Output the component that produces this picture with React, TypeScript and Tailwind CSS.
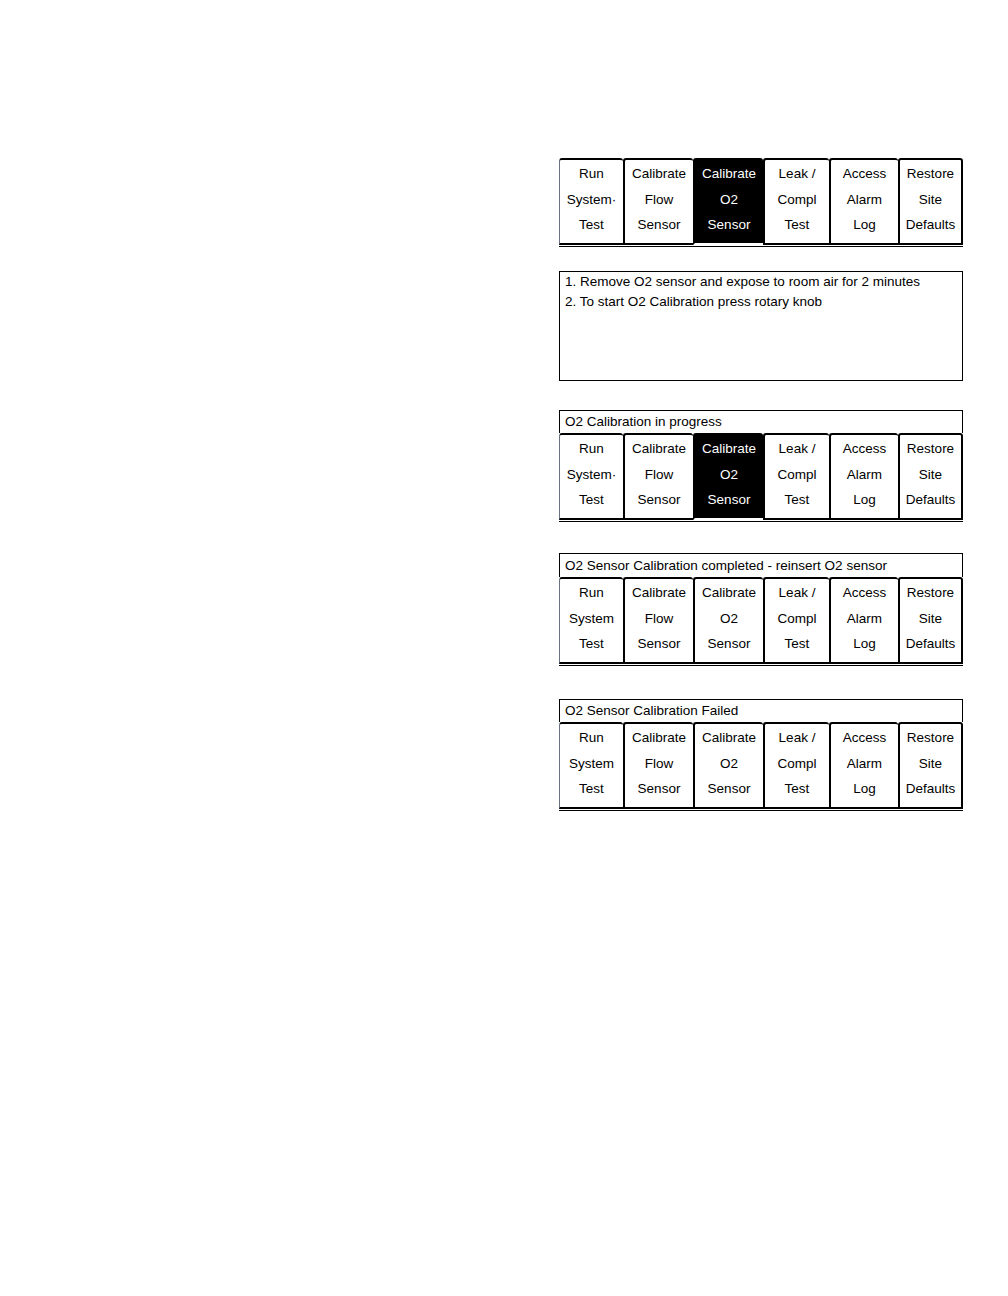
const tabs = [
  { lines: ["Run", "System·", "Test"], w: "w-[64px]" },
  { lines: ["Calibrate", "Flow", "Sensor"], w: "w-[70px]" },
  { lines: ["Calibrate", "O2", "Sensor"], w: "w-[70px]" },
  { lines: ["Leak /", "Compl", "Test"], w: "w-[66px]" },
  { lines: ["Access", "Alarm", "Log"], w: "w-[69px]" },
  { lines: ["Restore", "Site", "Defaults"], w: "w-[65px]" },
];

const TabBar = ({ selected, plain }: { selected?: number; plain?: boolean }) => (
  <div className="flex border-b border-black pb-px">
    {tabs.map((t, i) => {
      const on = i === selected;
      const lines = plain && i === 0 ? ["Run", "System", "Test"] : t.lines;
      return (
        <div
          key={i}
          className={[
            t.w,
            "flex flex-col items-center pt-px leading-[25.5px] h-[87px] rounded-t-[3px] border-t-2",
            i === 0 ? "border-l border-l-gray-500" : "border-l-2 border-l-black",
            i === tabs.length - 1 ? "border-r-2 border-r-black" : "",
            on ? "bg-black text-white border-t-black border-b-2 border-b-white" : "bg-white text-black border-t-black border-b-2 border-b-black",
          ].join(" ")}
        >
          {lines.map((l) => (
            <span key={l}>{l}</span>
          ))}
        </div>
      );
    })}
  </div>
);

const Header = ({ text, tall }: { text: string; tall?: boolean }) => (
  <div className={(tall ? "h-[24px] leading-[24px]" : "h-[23px] leading-[22px]") + " border border-black border-b-0 pl-[5px]"}>
    {text}
  </div>
);

export default function App() {
  return (
    <div className="min-h-[1296px] bg-white text-black text-[13.5px] font-['Liberation_Sans',Arial,sans-serif]">
      <div className="ml-[559px] w-[404px] pt-[158px] flex flex-col">
        <TabBar selected={2} />

        <div className="mt-[24px] h-[110px] border border-black pl-[5px] leading-[20px]">
          <div>1. Remove O2 sensor and expose to room air for 2 minutes</div>
          <div>2. To start O2 Calibration press rotary knob</div>
        </div>

        <div className="mt-[29px]">
          <Header text="O2 Calibration in progress" />
          <TabBar selected={2} />
        </div>

        <div className="mt-[31px]">
          <Header text="O2 Sensor Calibration completed - reinsert O2 sensor" tall />
          <TabBar plain />
        </div>

        <div className="mt-[33px]">
          <Header text="O2 Sensor Calibration Failed" />
          <TabBar plain />
        </div>
      </div>
    </div>
  );
}
